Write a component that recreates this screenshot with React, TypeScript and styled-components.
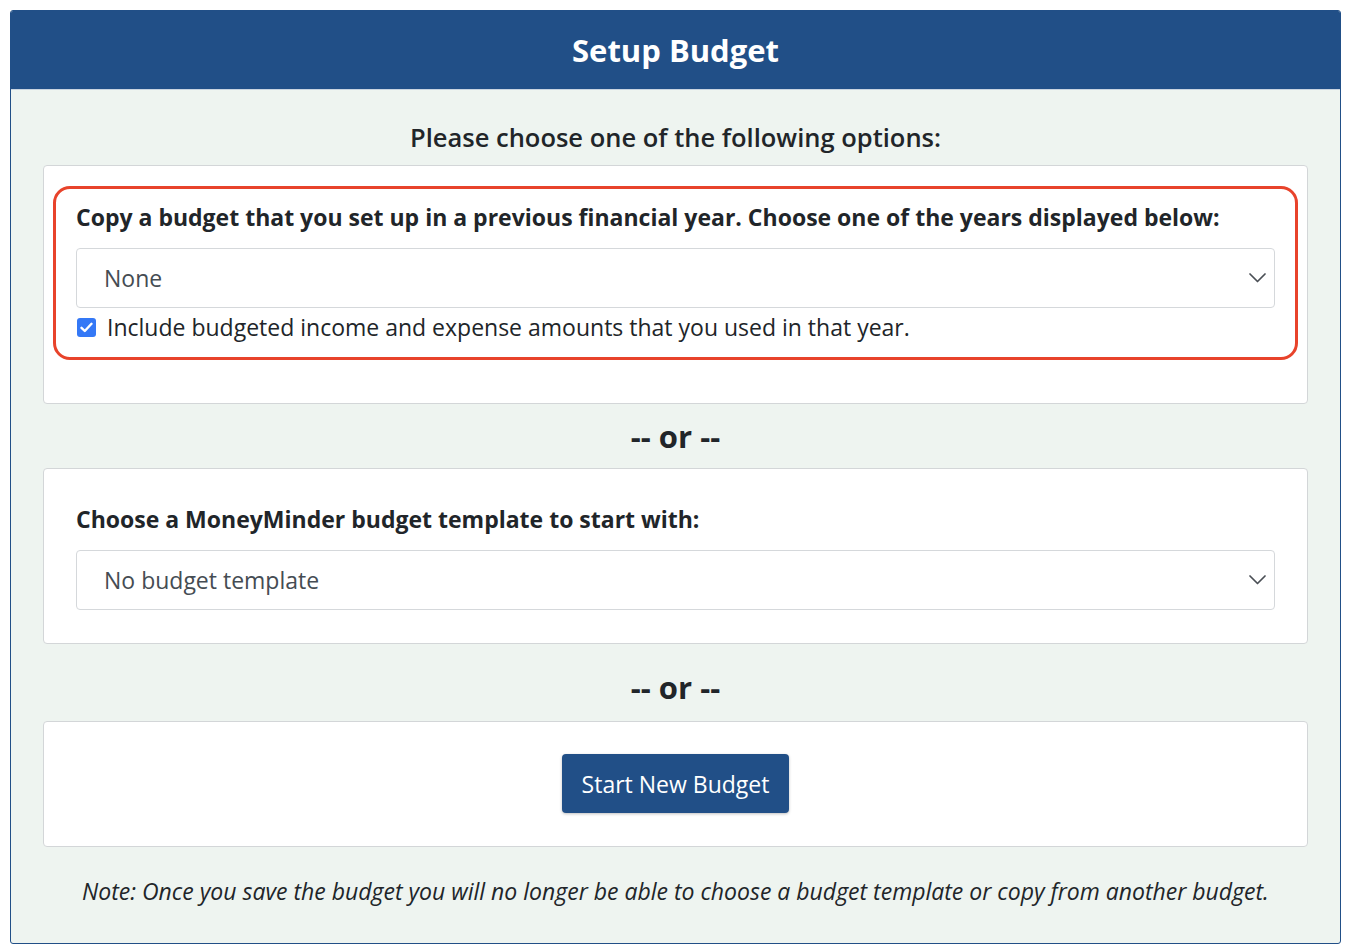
import styled, { createGlobalStyle } from "styled-components";

const GlobalStyle = createGlobalStyle`
  html, body {
    margin: 0;
    padding: 0;
    background: #ffffff;
  }
  body {
    font-family: "Open Sans", "Liberation Sans", sans-serif;
    color: #212529;
  }
`;

const Page = styled.div`
  padding: 10px 11px 9px 10px;
`;

const Panel = styled.div`
  border: 1px solid #214f87;
  border-radius: 3px;
  background: #eef4f0;
  display: flex;
  flex-direction: column;
  overflow: hidden;
`;

const Header = styled.div`
  height: 78px;
  background: #214f87;
  border-bottom: 1px solid #c9d4e0;
  display: flex;
  align-items: center;
  justify-content: center;
`;

const Title = styled.h1`
  margin: 0;
  font-size: 31px;
  font-weight: 700;
  color: #ffffff;
`;

const Body = styled.div`
  padding: 0 32px 35px;
  display: flex;
  flex-direction: column;
`;

const Lead = styled.div`
  margin: 29px 0 10px;
  font-size: 25.5px;
  font-weight: 600;
  line-height: 36px;
  text-align: center;
`;

const Card = styled.div<{ $pad: string }>`
  background: #ffffff;
  border: 1px solid #d3d6d8;
  border-radius: 4px;
  padding: ${(p) => p.$pad};
  display: flex;
  flex-direction: column;
`;

const Highlight = styled.div`
  border: 3px solid #e8432b;
  border-radius: 17px;
  padding: 12px 20px 13px;
  display: flex;
  flex-direction: column;
`;

const Label = styled.div`
  font-size: 23px;
  font-weight: 700;
  line-height: 33px;
  margin-bottom: 14px;
`;

const SelectBox = styled.div`
  height: 58px;
  border: 1px solid #d5d8db;
  border-radius: 4px;
  background: #ffffff;
  display: flex;
  align-items: center;
  justify-content: space-between;
  padding: 0 7px 0 27px;
  font-size: 23px;
  color: #454c53;
`;

const CheckRow = styled.label`
  margin-top: 3px;
  display: flex;
  align-items: center;
  gap: 11px;
  font-size: 23px;
  line-height: 33px;
  padding-left: 1px;
`;

const CheckBox = styled.span`
  width: 19px;
  height: 19px;
  border-radius: 3px;
  background: #3478f6;
  display: flex;
  align-items: center;
  justify-content: center;
`;

const Or = styled.div<{ $top: number; $bottom: number }>`
  margin: ${(p) => p.$top}px 0 ${(p) => p.$bottom}px;
  font-size: 31px;
  font-weight: 700;
  line-height: 34px;
  text-align: center;
`;

const Button = styled.button`
  align-self: center;
  height: 59px;
  padding: 0 20px;
  border: none;
  border-radius: 4px;
  background: #214f87;
  color: #ffffff;
  font-family: "Open Sans", "Liberation Sans", sans-serif;
  font-size: 23px;
  box-shadow: 0 1px 3px rgba(0, 0, 0, 0.25);
  cursor: pointer;
`;

const Note = styled.p`
  margin: 28px 0 0;
  font-size: 23px;
  font-style: italic;
  line-height: 33px;
  text-align: center;
`;

const Chevron = () => (
  <svg width="18" height="12" viewBox="0 0 18 12" fill="none">
    <path d="M1 2L8.5 9.5L16 2" stroke="#4a4f55" strokeWidth="1.7" strokeLinecap="round" strokeLinejoin="round" />
  </svg>
);

const Tick = () => (
  <svg width="13" height="11" viewBox="0 0 13 11" fill="none">
    <path d="M1.5 5.8L4.8 9L11.5 1.8" stroke="#ffffff" strokeWidth="2.4" strokeLinecap="round" strokeLinejoin="round" />
  </svg>
);

const Select = ({ value }: { value: string }) => (
  <SelectBox>
    <span>{value}</span>
    <Chevron />
  </SelectBox>
);

export default function App() {
  return (
    <Page>
      <GlobalStyle />
      <Panel>
        <Header>
          <Title>Setup Budget</Title>
        </Header>
        <Body>
          <Lead>Please choose one of the following options:</Lead>
          <Card $pad="20px 9px 43px">
            <Highlight>
              <Label>Copy a budget that you set up in a previous financial year. Choose one of the years displayed below:</Label>
              <Select value="None" />
              <CheckRow>
                <CheckBox>
                  <Tick />
                </CheckBox>
                Include budgeted income and expense amounts that you used in that year.
              </CheckRow>
            </Highlight>
          </Card>
          <Or $top={15} $bottom={15}>-- or --</Or>
          <Card $pad="34px 32px 33px">
            <Label>Choose a MoneyMinder budget template to start with:</Label>
            <Select value="No budget template" />
          </Card>
          <Or $top={26} $bottom={17}>-- or --</Or>
          <Card $pad="32px 32px 33px">
            <Button>Start New Budget</Button>
          </Card>
          <Note>Note: Once you save the budget you will no longer be able to choose a budget template or copy from another budget.</Note>
        </Body>
      </Panel>
    </Page>
  );
}
